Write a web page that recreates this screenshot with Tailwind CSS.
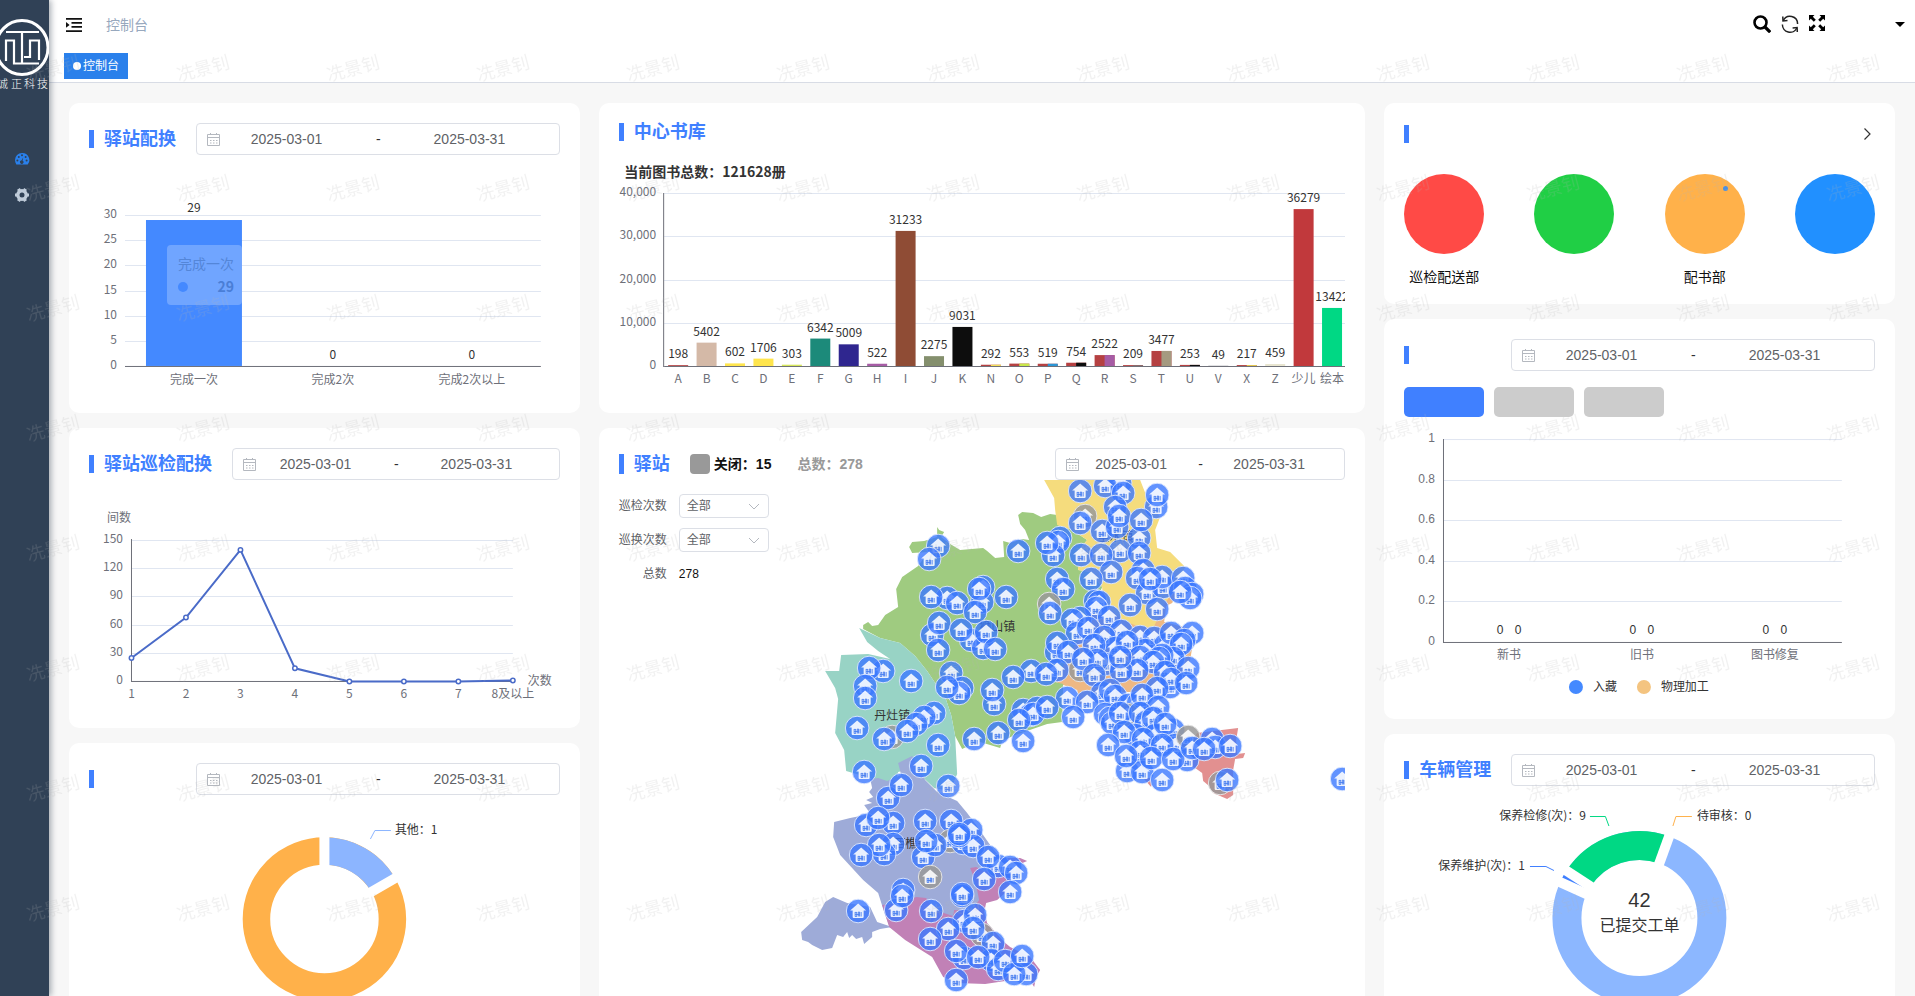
<!DOCTYPE html>
<html lang="zh-CN">
<head>
    <meta charset="UTF-8">
    <meta name="viewport" content="width=device-width, initial-scale=1.0">
    <title>控制台</title>
    <script src="https://cdn.jsdelivr.net/npm/@tailwindcss/browser@4"></script>
</head>
<body class="relative flex h-screen overflow-hidden bg-[#f7f7f7] text-sm text-[#333] font-['Liberation_Sans','Noto_Sans_CJK_SC',sans-serif]">

    <!-- Sidebar -->
    <aside class="relative z-10 w-[49px] shrink-0 bg-[#304156] shadow-[2px_0_6px_rgba(0,21,41,0.35)]">
        <svg class="block h-[100px] w-[49px] overflow-hidden" viewBox="0 0 49 100" fill="none" stroke="#fff">
            <ellipse cx="22" cy="47.500" rx="26" ry="27" stroke-width="3"/>
            <path stroke-width="2.200" d="M6 32H39M22 32V63M6 61V40.500H14V63.500H39M24 57H30V40.500H39V60"/>
            <text class="font-['Noto_Sans_CJK_SC',sans-serif] text-[11px] font-light" x="-3 11 24 37" y="88" fill="#fff" stroke="none">诚正科技</text>
        </svg>
        <nav class="flex flex-col items-center gap-5 pr-[5px] pt-[51px]">
            <a href="#" aria-label="控制台">
                <svg class="size-4" viewBox="0 0 16 16">
                    <path fill="#2a80eb" d="M8 2a7 7 0 0 0-7 7c0 1.600.5 3.100 1.300 4.500h11.400A7 7 0 0 0 8 2z"/>
                    <g fill="#304156"><circle cx="3.400" cy="9.500" r="1"/><circle cx="4.800" cy="6" r="1"/><circle cx="8" cy="4.300" r="1"/><circle cx="12.600" cy="9.500" r="1"/><circle cx="11.600" cy="6" r="1"/><path d="M9.200 6.500l-.6 3.200a1.700 1.700 0 1 1-1.200-.2z"/></g>
                </svg>
            </a>
            <a href="#" aria-label="设置">
                <svg class="size-4" viewBox="0 0 16 16" fill="none" stroke="#bfcbd9">
                    <circle cx="8" cy="8" r="4.200" stroke-width="3.400"/>
                    <path stroke-width="3.200" d="M4.500 1.900l1.400 2.500M11.500 1.900l-1.400 2.500M4.500 14.100l1.400-2.500M11.500 14.100l-1.400-2.500M1 8h2.500M12.500 8H15"/>
                </svg>
            </a>
        </nav>
    </aside>

    <div class="flex min-w-0 flex-1 flex-col">
        <!-- Top bar -->
        <header class="shrink-0 border-b border-[#d8dce5] bg-white">
            <div class="flex h-[50px] items-start pl-[17px] pr-2.5">
                <button type="button" class="mt-[17px]" aria-label="折叠菜单">
                    <svg class="block size-4" viewBox="0 0 16 16" fill="#111"><path d="M0 1h16v1.700H0zM5.500 5h10.500v1.700H5.500zM5.500 9h10.500v1.700H5.500zM0 13.300h16V15H0zM0 5l3.600 2.900L0 10.800z"/></svg>
                </button>
                <a href="#" class="ml-6 mt-[15px] leading-5 text-[#97a8be]">控制台</a>
                <div class="ml-auto mt-[15px] flex items-start gap-[10px]">
                    <button type="button" aria-label="搜索"><svg class="block size-[18px]" viewBox="0 0 18 18" fill="none" stroke="#000"><circle cx="7.500" cy="7.500" r="6" stroke-width="2.600"/><path stroke-width="3.200" d="M12 12l5.200 5.200"/></svg></button>
                    <button type="button" aria-label="刷新"><svg class="block size-[18px]" viewBox="0 0 18 18" fill="none" stroke="#222" stroke-width="1.500"><path d="M2.200 5.600A7.600 7.600 0 0 1 16.600 9M1.400 9.500A7.600 7.600 0 0 0 15.800 13"/><path d="M1.800 1.500l.2 4.500 4.500-.4M16.300 17l-.2-4.500-4.500.4"/></svg></button>
                    <button type="button" aria-label="全屏"><svg class="block size-4" viewBox="0 0 16 16"><path d="M0 0h5.500L3.800 1.800l3 3-2 2-3-3L0 5.500zM16 0v5.500l-1.800-1.700-3 3-2-2 3-3L10.500 0zM0 16v-5.500l1.800 1.700 3-3 2 2-3 3L5.500 16zM16 16h-5.500l1.700-1.800-3-3 2-2 3 3 1.800-1.700z"/></svg></button>
                    <button type="button" class="ml-[60px] mt-[7px]" aria-label="用户菜单"><svg class="block h-[5px] w-[10px]" viewBox="0 0 10 5"><path d="M0 0h10L5 5z"/></svg></button>
                </div>
            </div>
            <div class="flex h-8 items-start pl-[15px] pt-[3px]">
                <a href="#" class="flex h-[26px] items-center gap-0.5 bg-[#2a80eb] px-[9px] text-xs text-white"><span class="size-2 rounded-full bg-white"></span>控制台</a>
            </div>
        </header>

        <main class="grid min-h-0 flex-1 grid-cols-[1fr_1.5fr_1fr] items-start gap-[19px] overflow-y-auto p-5 [scrollbar-width:none]">
            <!-- Left column -->
            <div class="flex min-w-0 flex-col gap-[15px]">
                <section class="rounded-[10px] bg-white p-5">
                    <div class="flex h-8 items-center">
                        <i class="h-[18px] w-[5px] bg-[#4080ff]"></i>
                        <h2 class="ml-[10px] mr-5 text-lg font-bold text-[#4080ff]">驿站配换</h2>
                        <div data-range class="relative flex h-8 min-w-0 flex-1 items-center rounded border border-[#dcdfe6] text-[#606266]"></div>
                    </div>
                    <svg id="deliverChart" class="block h-[238px] w-full font-['Noto_Sans_CJK_SC',sans-serif] text-xs" viewBox="0 0 471 238"></svg>
                </section>
                <section class="rounded-[10px] bg-white p-5">
                    <div class="flex h-8 items-center">
                        <i class="h-[18px] w-[5px] bg-[#4080ff]"></i>
                        <h2 class="ml-[10px] mr-5 text-lg font-bold text-[#4080ff]">驿站巡检配换</h2>
                        <div data-range class="relative flex h-8 min-w-0 flex-1 items-center rounded border border-[#dcdfe6] px-1 text-[#606266]"></div>
                    </div>
                    <svg id="patrolChart" class="block h-[228px] w-full font-['Noto_Sans_CJK_SC',sans-serif] text-xs" viewBox="0 0 471 228"></svg>
                </section>
                <section class="rounded-[10px] bg-white p-5">
                    <div class="flex h-8 items-center">
                        <i class="h-[18px] w-[5px] bg-[#4080ff]"></i>
                        <span class="ml-[10px] mr-5 w-[72px]"></span>
                        <div data-range class="relative flex h-8 min-w-0 flex-1 items-center rounded border border-[#dcdfe6] text-[#606266]"></div>
                    </div>
                    <svg class="block h-[228px] w-full font-['Noto_Sans_CJK_SC',sans-serif] text-xs" viewBox="0 0 471 228" fill="none">
                        <circle cx="235.500" cy="124" r="68" stroke="#ffb14a" stroke-width="27.500"/>
                        <circle cx="235.500" cy="124" r="68" stroke="#8cb5ff" stroke-width="27.500" pathLength="360" stroke-dasharray="60 300" transform="rotate(-90 235.500 124)"/>
                        <path stroke="#fff" stroke-width="10" d="M235.500 124V35M235.500 124L312.600 79.500"/>
                        <path stroke="#8cb5ff" d="M281.500 44l4.500-8.500h16"/>
                        <text x="306" y="39" fill="#333">其他：1</text>
                    </svg>
                </section>
            </div>

            <!-- Middle column -->
            <div class="flex min-w-0 flex-col gap-[15px]">
                <section class="rounded-[10px] bg-white p-5">
                    <div class="flex h-[18px] items-center">
                        <i class="h-[18px] w-[5px] bg-[#4080ff]"></i>
                        <h2 class="ml-[10px] text-lg font-bold text-[#4080ff]">中心书库</h2>
                    </div>
                    <svg id="libraryChart" class="block h-[252px] w-full overflow-hidden font-['Noto_Sans_CJK_SC',sans-serif] text-xs" viewBox="0 0 726 252"></svg>
                </section>
                <section class="rounded-[10px] bg-white p-5">
                    <div class="flex h-8 items-center font-bold">
                        <i class="h-5 w-[5px] bg-[#4080ff]"></i>
                        <h2 class="ml-[10px] mr-5 text-lg text-[#4080ff]">驿站</h2>
                        <i class="mr-1 size-5 rounded bg-[#999]"></i>
                        <span class="text-[#111]">关闭：15</span>
                        <span class="ml-[26px] text-[#999]">总数：278</span>
                        <div data-range class="relative ml-auto flex h-8 w-[290px] items-center rounded border border-[#dcdfe6] px-2 font-normal text-[#606266]"></div>
                    </div>
                    <div class="flex">
                        <form class="flex w-[151px] shrink-0 flex-col gap-[10px] pt-[14px] text-xs text-[#606266]">
                            <div class="flex h-6 items-center gap-3">
                                <label for="patrolTimes" class="w-12">巡检次数</label>
                                <div class="relative">
                                    <select id="patrolTimes" class="h-6 w-[90px] appearance-none rounded border border-[#dcdfe6] bg-white pl-[7px]"><option>全部</option></select>
                                    <svg class="pointer-events-none absolute right-[9px] top-[9px] h-[7px] w-3" viewBox="0 0 12 7" fill="none" stroke="#b4b8bf"><path d="M1 1l5 5 5-5"/></svg>
                                </div>
                            </div>
                            <div class="flex h-6 items-center gap-3">
                                <label for="swapTimes" class="w-12">巡换次数</label>
                                <div class="relative">
                                    <select id="swapTimes" class="h-6 w-[90px] appearance-none rounded border border-[#dcdfe6] bg-white pl-[7px]"><option>全部</option></select>
                                    <svg class="pointer-events-none absolute right-[9px] top-[9px] h-[7px] w-3" viewBox="0 0 12 7" fill="none" stroke="#b4b8bf"><path d="M1 1l5 5 5-5"/></svg>
                                </div>
                            </div>
                            <div class="flex h-6 items-center gap-3">
                                <span class="w-12 text-right">总数</span>
                                <span class="text-[#111]">278</span>
                            </div>
                        </form>
                        <!-- District map, drawn in map units starting at 770,480 -->
                        <svg class="block h-[516px] min-w-0 flex-1 overflow-hidden font-['Noto_Sans_CJK_SC',sans-serif] text-xs" viewBox="770 480 575 516">
                            <defs>
                                <g id="house">
                                    <path fill="#fff" fill-opacity=".88" d="M0-7.500L8-.5H5.500V6Q5.500 7 4.500 7H-4.500Q-5.500 7-5.500 6V-.5H-8z"/>
                                    <path fill="none" stroke="#4a7fef" stroke-width=".9" d="M-3 1V5.500M-3 1.400H-1.400M-1.400 1V5.500H-3M.2 5.500V1H1.400V5.500M3 1V5.500M-3 3.500H1.400"/>
                                </g>
                                <g id="station"><circle r="11.800" fill="#3b78ff" fill-opacity=".8" stroke="#dfe9ff" stroke-opacity=".9"/><use href="#house"/></g>
                                <g id="closed"><circle r="11.800" fill="#999" fill-opacity=".85" stroke="#e4e4e4"/><use href="#house"/></g>
                            </defs>
                            <path fill="#eeb883" d="M1080 610L1110 590 1177 593 1172 603 1166 606 1164 622 1195 630 1190 660 1180 683 1150 692 1123 692 1080 704 1077 690 1055 682 1063 664z"/>
                            <path fill="#9fcb80" d="M937 527L939 530 944 532 941 537 950 544 960 550 983 548 987 551 995 558 1004 557 1003 541 1010 543 1022 539 1029 540 1025 530 1020 524 1018 515 1022 512 1033 513 1041 517 1050 514 1057 515 1058 525 1072 530 1087 540 1077 552 1078 570 1090 572 1102 587 1095 605 1085 620 1078 640 1066 660 1055 682 1063 684 1062 722 1047 724 1015 735 1002 741 1000 748 980 742 968 746 962 749 955 736 951 715 946 700 935 683 927 671 915 656 900 643 880 638 863 629 863 625 868 622 872 626 878 625 885 615 898 607 896 589 902 577 918 566 928 552 912 553 909 547 912 542 924 541 937 537z"/>
                            <path fill="#98d3c5" d="M859 628L880 638 900 643 915 656 927 671 935 683 946 700 951 715 955 736 957 774 950 791 934 788 918 773 912 768 898 772 893 790 870 778 846 771 844 750 835 733 838 699 835 688 825 671 839 671 841 655 868 654 890 659 878 651 867 642z"/>
                            <path fill="#9eabd8" d="M912 756L898 763 901 775 887 781 878 778 870 779 872 788 869 792 873 797 866 800 872 803 864 805 869 812 865 815 850 818 834 822 833 837 840 855 863 880 878 893 884 912 890 928 977 930 985 895 1000 858 990 845 976 825 967 813 957 801 937 792 925 780zM833 897L825 902 817 917 801 932 802 940 808 942 812 945 822 950 832 948 837 935 843 937 847 932 849 938 852 935 856 939 862 937 864 944 872 937 872 932 880 929 892 927 877 922 870 907 847 903z"/>
                            <path fill="#c181b6" d="M882 905L900 903 916 897 926 898 934 910 953 916 954 910 971 911 979 900 977 890 972 873 970 868 976 867 985 872 1000 858 1020 858 1027 861 1020 864 1012 878 1006 892 997 900 986 903 984 912 987 923 1004 942 1010 947 1030 957 1040 970 1036 977 1034 987 1028 977 1005 981 985 984 957 983 943 977 932 957 905 940 889 927z"/>
                            <path fill="#f5dc7d" d="M1044 480L1054 498 1055 510 1057 525 1072 530 1087 540 1077 552 1078 570 1090 572 1102 587 1103 603 1122 620 1137 626 1153 628 1158 618 1164 604 1175 590 1185 567 1170 552 1157 548 1155 530 1160 517 1149 503 1140 480z"/>
                            <path fill="#e29090" d="M1197 733L1238 728 1236 740 1237 754 1245 753 1243 758 1235 759 1233 770 1233 795 1227 799 1213 793 1209 786 1203 781 1202 773 1195 768 1180 762 1188 745zM1143 778L1151 787 1151 778z"/>
                            <g fill="#333" text-anchor="middle">
                                <text x="892" y="720">丹灶镇</text><text x="997" y="631">狮山镇</text><text x="911" y="848">西樵镇</text><text x="1115" y="541">里水镇</text>
                            </g>
                            <g id="stations"></g>
                        </svg>
                    </div>
                </section>
            </div>

            <!-- Right column -->
            <div class="flex min-w-0 flex-col gap-[15px]">
                <section class="rounded-[10px] bg-white p-5">
                    <div class="flex h-[22px] items-center justify-between">
                        <i class="h-[18px] w-[5px] bg-[#4080ff]"></i>
                        <a href="#" class="mr-1" aria-label="更多"><svg class="block h-3 w-[7px]" viewBox="0 0 7 12" fill="none" stroke="#333" stroke-width="1.200"><path d="M.5.5L6 6 .5 11.500"/></svg></a>
                    </div>
                    <div class="mt-[29px] flex justify-between text-center leading-[14px] text-[#111]">
                        <div class="w-20"><div class="mb-4 size-20 rounded-full bg-[#ff4a46]"></div>巡检配送部</div>
                        <div class="w-20"><div class="mb-4 size-20 rounded-full bg-[#20cf45]"></div></div>
                        <div class="w-20"><div class="mb-4 size-20 rounded-full bg-[#ffb14a] pl-[58px] pt-3"><div class="size-[5px] rounded-full bg-[#4a90e2]"></div></div>配书部</div>
                        <div class="w-20"><div class="mb-4 size-20 rounded-full bg-[#2190ff]"></div></div>
                    </div>
                </section>
                <section class="rounded-[10px] bg-white p-5">
                    <div class="flex h-8 items-center">
                        <i class="h-[18px] w-[5px] bg-[#4080ff]"></i>
                        <span class="ml-[10px] mr-5 w-[72px]"></span>
                        <div data-range class="relative flex h-8 min-w-0 flex-1 items-center rounded border border-[#dcdfe6] text-[#606266]"></div>
                    </div>
                    <div class="mt-4 flex gap-[10px]">
                        <button type="button" class="h-[30px] w-20 rounded-[5px] bg-[#4080ff]" aria-label="统计一"></button>
                        <button type="button" class="h-[30px] w-20 rounded-[5px] bg-[#ccc]" aria-label="统计二"></button>
                        <button type="button" class="h-[30px] w-20 rounded-[5px] bg-[#ccc]" aria-label="统计三"></button>
                    </div>
                    <svg id="bookChart" class="block h-[282px] w-full font-['Liberation_Sans','Noto_Sans_CJK_SC',sans-serif] text-xs" viewBox="0 0 471 282"></svg>
                </section>
                <section class="rounded-[10px] bg-white p-5">
                    <div class="flex h-8 items-center">
                        <i class="h-[18px] w-[5px] bg-[#4080ff]"></i>
                        <h2 class="ml-[10px] mr-5 text-lg font-bold text-[#4080ff]">车辆管理</h2>
                        <div data-range class="relative flex h-8 min-w-0 flex-1 items-center rounded border border-[#dcdfe6] text-[#606266]"></div>
                    </div>
                    <svg class="block h-[238px] w-full font-['Noto_Sans_CJK_SC',sans-serif] text-xs" viewBox="0 0 471 238" fill="none">
                        <circle cx="235.500" cy="132" r="72.500" stroke="#8cb7ff" stroke-width="29"/>
                        <circle cx="235.500" cy="132" r="72.500" stroke="#00d884" stroke-width="29" pathLength="360" stroke-dasharray="77.100 282.900" transform="rotate(-147.100 235.500 132)"/>
                        <circle cx="235.500" cy="132" r="72.500" stroke="#4080ff" stroke-width="29" pathLength="360" stroke-dasharray="8.600 351.400" transform="rotate(-155.700 235.500 132)"/>
                        <g stroke="#fff" stroke-width="10">
                            <path d="M235.500 82V40" transform="rotate(20 235.500 132)"/>
                            <path d="M235.500 82V40" transform="rotate(-57.100 235.500 132)"/>
                            <path d="M235.500 82V40" transform="rotate(-65.700 235.500 132)"/>
                        </g>
                        <path stroke="#00d884" d="M186 30.500h15.500l3.500 9.500"/>
                        <path stroke="#4080ff" d="M126 80.500h16l8 4"/>
                        <path stroke="#ffb14a" d="M288 30.500h-16l-3 9.500"/>
                        <g fill="#333">
                            <text x="182" y="34" text-anchor="end">保养检修(次)：9</text>
                            <text x="121" y="84" text-anchor="end">保养维护(次)：1</text>
                            <text x="293" y="34">待审核：0</text>
                            <text class="font-['Liberation_Sans',sans-serif] text-xl" x="235.500" y="121" text-anchor="middle">42</text>
                            <text class="text-base" x="235.500" y="145" text-anchor="middle">已提交工单</text>
                        </g>
                    </svg>
                </section>
            </div>
        </main>
    </div>

    <!-- Watermark -->
    <svg class="pointer-events-none absolute inset-0 z-20 size-full" aria-hidden="true">
        <defs>
            <pattern id="mark" x="-22" y="8" width="150" height="120" patternUnits="userSpaceOnUse">
                <text class="font-['Noto_Sans_CJK_SC',sans-serif] text-lg" x="75" y="67" text-anchor="middle" fill="#b4b4b4" fill-opacity=".18" transform="rotate(-15 75 60)">冼景钊</text>
            </pattern>
        </defs>
        <rect width="100%" height="100%" fill="url(#mark)"/>
    </svg>

    <script>
        // date range pickers
        document.querySelectorAll('[data-range]').forEach(function (box) {
            box.innerHTML =
                '<svg class="absolute left-[10px] top-[9px] size-[13px]" viewBox="0 0 13 13" fill="none" stroke="#b4b8bf"><path d="M.5 1.500h12v11H.5zM.5 4.500h12M3.500 0v2M9.500 0v2M3 7.500h1.500M6 7.500h1.500M9 7.500h1.500M3 10h1.500M6 10h1.500M9 10h1.500"/></svg>' +
                '<input type="text" aria-label="开始日期" value="2025-03-01" class="min-w-0 flex-1 bg-transparent text-center outline-none">' +
                '<span class="w-1 text-center text-[#303133]">-</span>' +
                '<input type="text" aria-label="结束日期" value="2025-03-31" class="min-w-0 flex-1 bg-transparent text-center outline-none">';
        });

        function text(x, y, value, fill, anchor) {
            return '<text x="' + x + '" y="' + y + '" fill="' + (fill || '#6e7079') + '" text-anchor="' + (anchor || 'middle') + '">' + value + '</text>';
        }
        function rect(x, y, w, h, fill) {
            return '<rect x="' + x + '" y="' + y + '" width="' + w + '" height="' + h + '" fill="' + fill + '"/>';
        }
        // horizontal grid lines with their labels, the last one is the axis
        function grid(left, right, top, bottom, labels) {
            const step = (bottom - top) / (labels.length - 1);
            return labels.map(function (label, i) {
                const y = Math.round(top + step * i);
                const last = i === labels.length - 1;
                return rect(left, y, right - left, 1, last ? '#6e7079' : '#e0e6f1') + text(left - 8, y + 3, label, '#6e7079', 'end');
            }).join('');
        }

        // 驿站配换
        let out = grid(36, 452, 60, 211, [30, 25, 20, 15, 10, 5, 0]);
        out += rect(57, 65, 96, 146, '#4489ff');
        ['完成一次', '完成2次', '完成2次以上'].forEach(function (name, i) {
            out += text(105 + i * 139, 229, name) + text(105 + i * 139, i ? 204 : 57, i ? 0 : 29, '#333');
        });
        out += '<rect x="78" y="90" width="75" height="60" rx="4" fill="#fff" fill-opacity=".24"/>' +
            '<circle cx="94" cy="132" r="5" fill="#4489ff"/>' +
            '<g class="text-sm">' + text(117, 114, '完成一次', '#5486d8') + '</g>' +
            '<g class="text-sm font-bold">' + text(145, 137, 29, '#4a7ed6', 'end') + '</g>';
        document.getElementById('deliverChart').innerHTML = out;

        // 驿站巡检配换
        out = grid(42, 424, 60, 201, [150, 120, 90, 60, 30, 0]) + rect(42, 59, 1, 142, '#6e7079');
        const points = [25, 68, 140, 14, 0, 0, 0, 1].map(function (v, i) {
            return [42.5 + i * 54.5, 201.5 - v * 0.94];
        });
        out += '<polyline fill="none" stroke="#4a6bc8" stroke-width="2" points="' + points.join(' ') + '"/>';
        points.forEach(function (p, i) {
            out += '<circle cx="' + p[0] + '" cy="' + p[1] + '" r="2.200" fill="#fff" stroke="#4a6bc8" stroke-width="1.500"/>';
            out += text(p[0], 218, i === 7 ? '8及以上' : i + 1);
        });
        out += text(30, 42, '间数') + text(451, 205, '次数');
        document.getElementById('patrolChart').innerHTML = out;

        // 中心书库
        const red = '#b54142';
        const books = [
            ['A', 198, red], ['B', 5402, '#d4b9a7'], ['C', 602, '#ffe54d'], ['D', 1706, '#ffe54d'], ['E', 303, '#d7e85c'],
            ['F', 6342, '#1c8a7a'], ['G', 5009, '#2f268f'], ['H', 522, '#a65ca5'], ['I', 31233, '#8f4c35'], ['J', 2275, '#848f6d'],
            ['K', 9031, '#0d0d0d'], ['N', 292, red, '#f5e05a'], ['O', 553, red, '#c8e84a'], ['P', 519, red, '#2a95d5'],
            ['Q', 754, red, '#0d0d0d'], ['R', 2522, red, '#a65ca5'], ['S', 209, red, '#8a6d6d'], ['T', 3477, red, '#a59a80'],
            ['U', 253, red, '#0d0d0d'], ['V', 49, '#6e7079'], ['X', 217, red, '#e8cf50'], ['Z', 459, '#e8e5d0'],
            ['少儿', 36279, '#c1393c'], ['绘本', 13422, '#00d884']
        ];
        out = '<g class="text-sm font-bold">' + text(5, 36, '当前图书总数：121628册', '#333', 'start') + '</g>';
        out += grid(45, 727, 52, 225, ['40,000', '30,000', '20,000', '10,000', 0]) + rect(44, 52, 1, 174, '#6e7079');
        books.forEach(function (b, i) {
            const x = 59 + i * 28.43;
            const h = b[1] * 173 / 40000;
            const top = 225 - h;
            out += rect(x - 10, top, 20, h, b[2]);
            if (b[3]) out += rect(x, top, 10, h, b[3]);
            out += text(x, 242, b[0]) + text(x, top - 7, b[1], '#333');
        });
        document.getElementById('libraryChart').innerHTML = out;

        // 新书 / 旧书 / 图书修复
        out = grid(39, 438, 22, 225, [1, 0.8, 0.6, 0.4, 0.2, 0]) + rect(39, 22, 1, 204, '#6e7079');
        ['新书', '旧书', '图书修复'].forEach(function (name, i) {
            const x = 105 + i * 133;
            out += text(x, 242, name) + text(x - 9, 217, 0, '#333') + text(x + 9, 217, 0, '#333');
        });
        out += '<circle cx="172" cy="270" r="7" fill="#4489ff"/><circle cx="240" cy="270" r="7" fill="#f4c480"/>';
        out += text(189, 274, '入藏', '#333', 'start') + text(257, 274, '物理加工', '#333', 'start');
        document.getElementById('bookChart').innerHTML = out;

        // stations: x, y and a third value when the station is closed
        const stations = [
            [938,546],[929,559],[947,598],[931,597],[957,603],[983,587],[982,602],[975,612],[979,589],[1006,597],
            [932,635],[939,623],[938,650],[971,640],[961,630],[983,648],[986,632],[995,649],[951,673],[962,688],[959,693],[947,687],
            [883,671],[869,668],[911,681],[865,686],[865,698],[857,728],[892,737,1],[884,739],[934,713],[924,717],[916,724],[907,731],
            [938,745],[974,739],[921,766],[864,772],[948,786],[888,798],[901,785],[866,825],[893,823],[878,818],[925,821],[951,821],
            [971,830],[950,841,1],[963,843],[973,846],[959,836],[959,834],[923,857],[935,845],[926,841],[893,844],[884,854],[879,845],[861,855],
            [998,866],[988,857],[930,877,1],[1010,867],[1016,873],[984,879],[1010,892],[903,890],[896,910],[902,896],[962,896],[962,894],
            [931,911],[858,911],[964,921],[975,915],[948,929],[982,935,1],[973,928],[930,939],[964,958],[956,951],[993,943],[991,960],[978,957],
            [998,969],[1005,961],[1026,974],[1014,974],[1022,956],[956,980],
            [1018,551],[1060,538],[1058,542],[1053,555],[1047,543],[1120,483],[1105,486],[1123,493],[1080,491],[1085,516,1],[1080,523],
            [1156,507],[1157,495],[1115,507],[1102,531],[1117,527],[1119,516],[1139,538],[1141,520],[1120,551],[1081,555],[1101,555],[1139,553],
            [1143,570],[1137,578],[1111,572],[1091,579],[1057,579],[1063,589],[1147,593],[1163,587],[1162,577],[1150,579],[1183,578],[1185,588],[1192,594],[1190,598],[1180,592],
            [1049,604,1],[1050,613],[1130,605],[1157,609],[1095,601],[1099,602],[1096,608],[1109,617],[1080,618],[1072,620],[1077,633],[1088,628],
            [1121,631],[1104,637],[1140,637],[1154,638],[1175,650],[1165,645],[1145,650],[1192,633],[1171,633],[1184,640],[1181,644],[1056,652],[1057,643],[1068,652],[1115,648],[1127,642],[1094,645],
            [1080,670,1],[1057,670],[1140,657],[1173,658],[1162,655],[1159,658],[1153,662],[1105,664],[1097,660],[1083,659],[1137,670],[1121,671],[1120,657],[1094,675],
            [1188,668],[1165,672],[1170,687],[1171,679],[1186,683],[1157,688],[1031,671],[1013,677],[1046,674],[994,704],[992,690],
            [1067,698],[1102,693],[1087,702],[1110,690],[1115,696],[1128,705],[1138,703],[1142,695],[1158,707],
            [1023,710],[1030,715],[1037,708],[1033,714],[1047,707],[1019,720],[1073,717],[998,733],[1023,741],
            [1105,714],[1110,718],[1112,723],[1127,715,1],[1120,713],[1140,713],[1146,722],[1153,718],[1135,735],[1124,732],[1108,745],[1155,735],[1143,739],[1173,730],[1165,724],[1175,745],
            [1162,745],[1140,752],[1127,771],[1142,772],[1126,756],[1162,780],[1151,758],[1187,760],[1173,759],
            [1188,737,1],[1192,748],[1212,739],[1215,747],[1204,749],[1230,746],[1220,783,1],[1227,780],[1342,779]
        ];
        document.getElementById('stations').innerHTML = stations.map(function (s) {
            return '<use href="' + (s[2] ? '#closed' : '#station') + '" x="' + s[0] + '" y="' + s[1] + '"/>';
        }).join('');
    </script>

</body>
</html>
